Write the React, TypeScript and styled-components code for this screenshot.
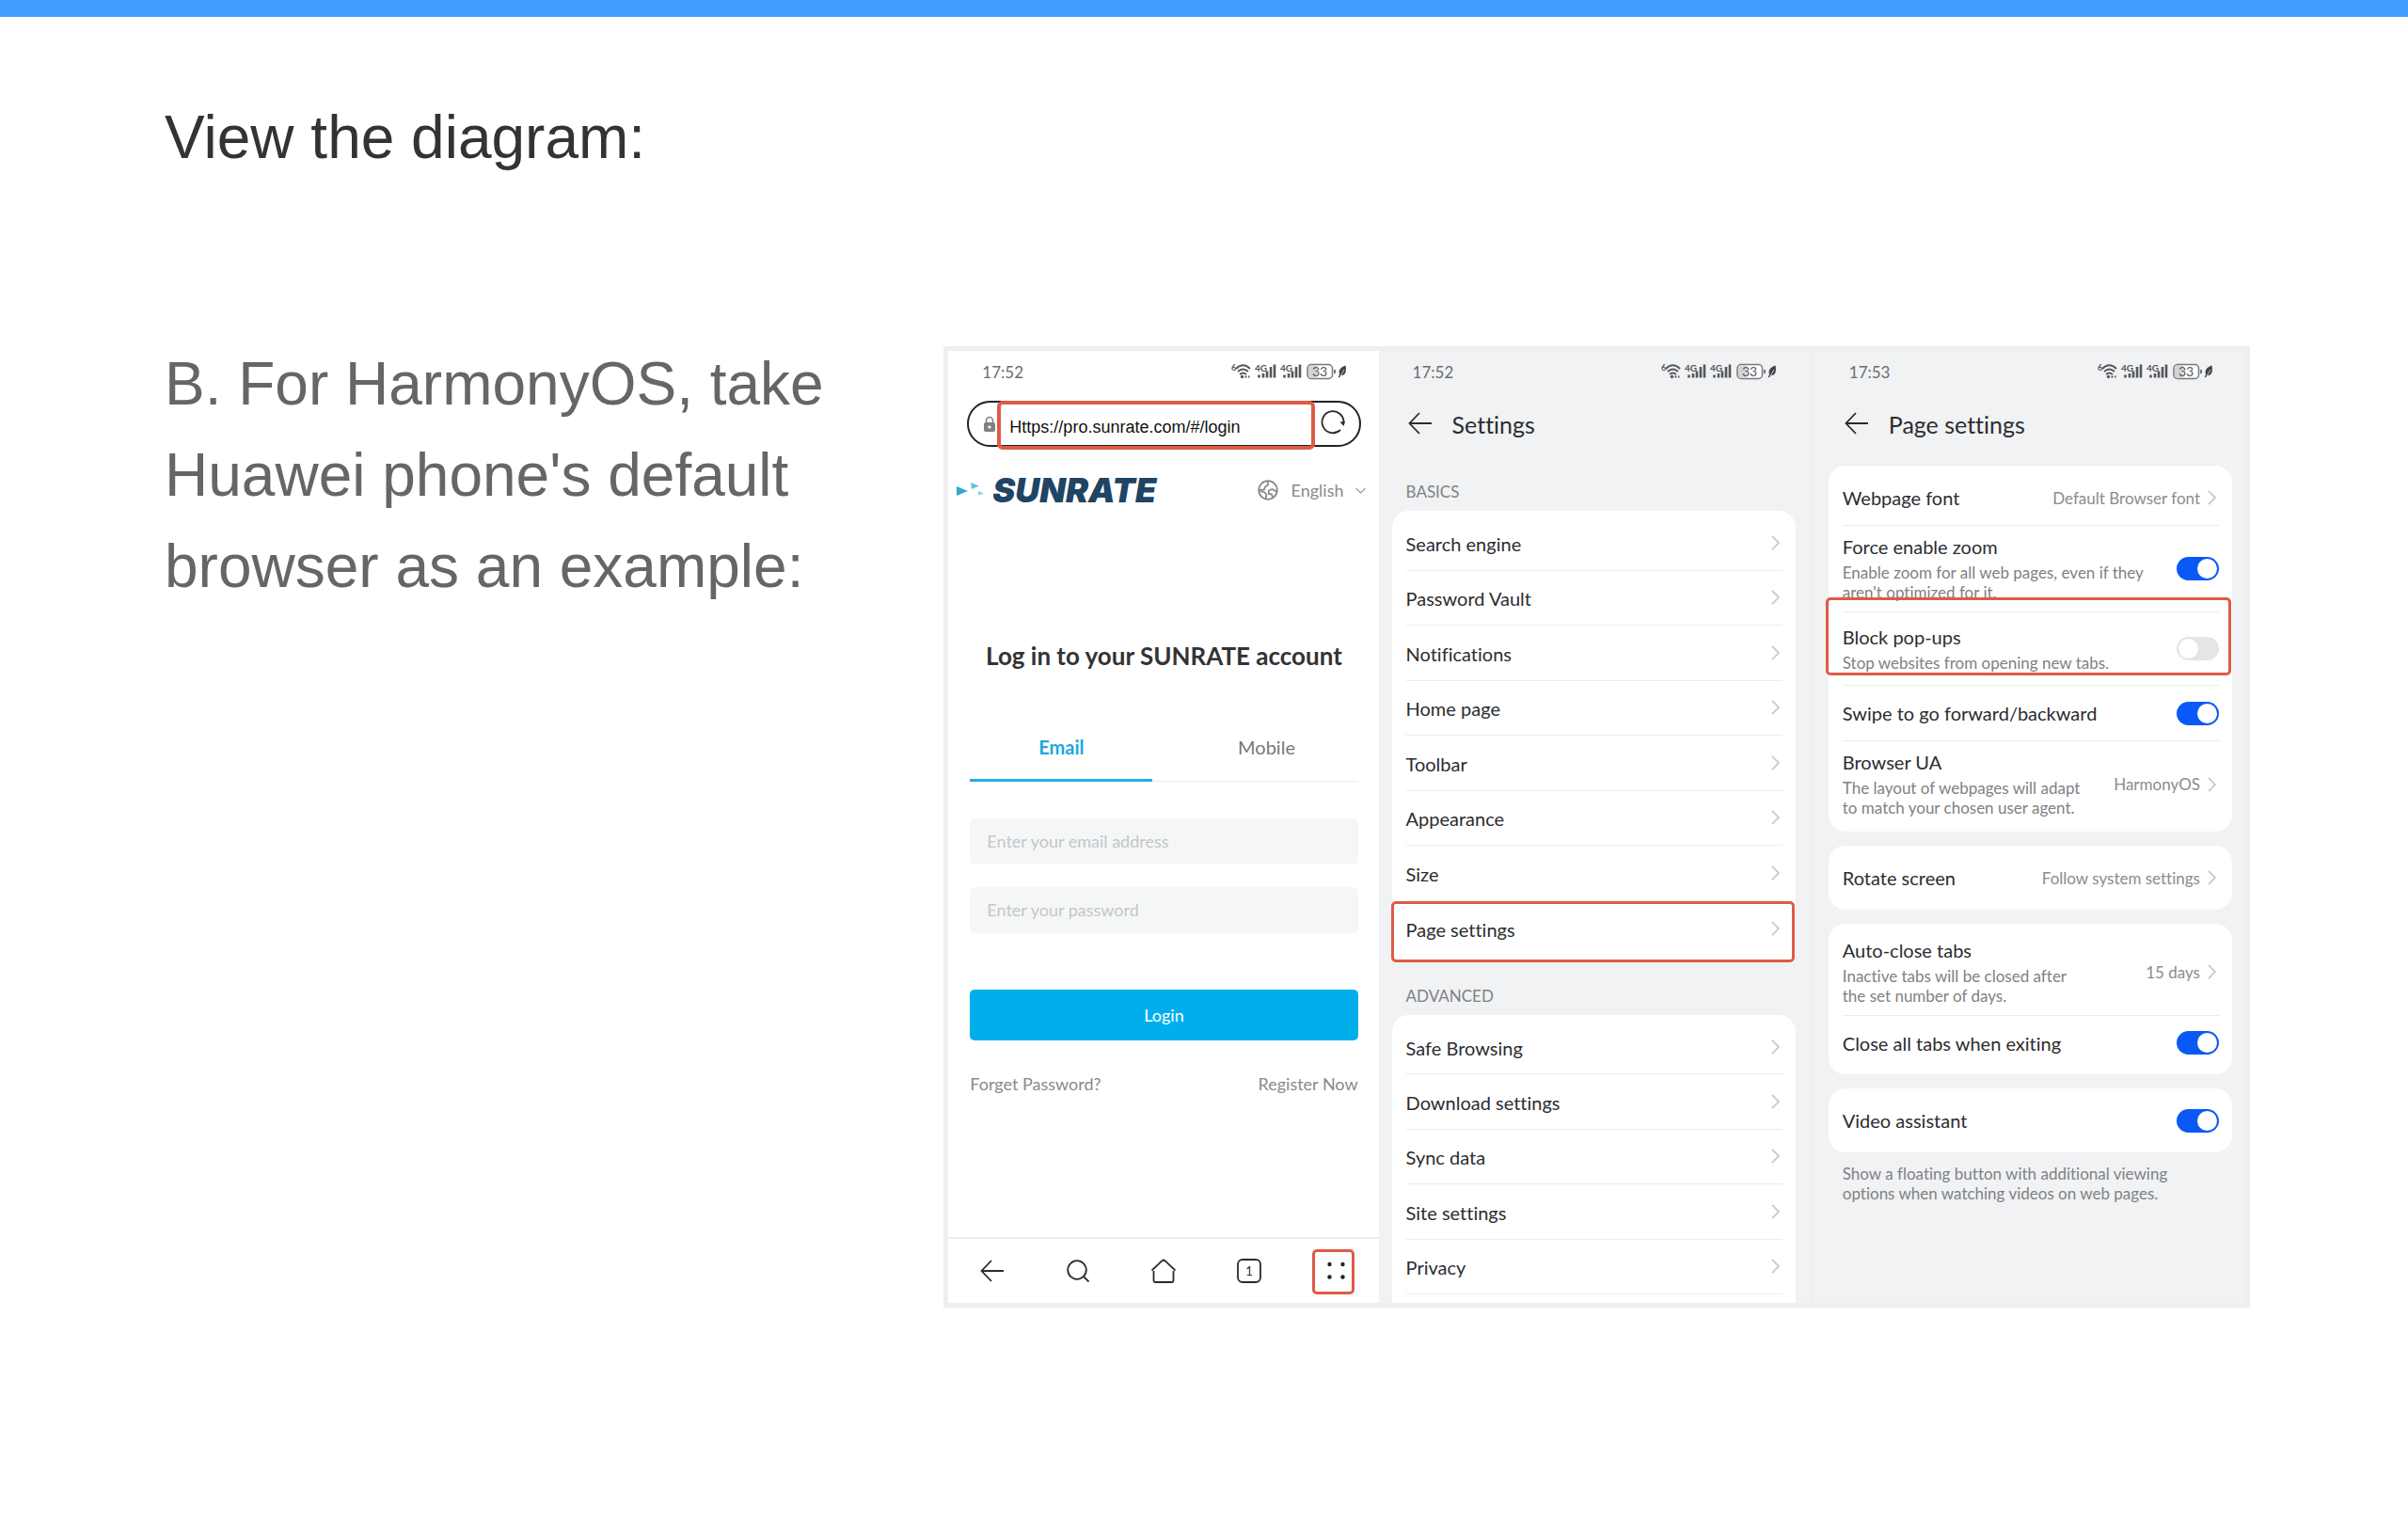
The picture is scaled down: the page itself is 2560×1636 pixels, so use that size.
import React from "react";
import styled, { createGlobalStyle, css } from "styled-components";

const phoneFont = `Lato, "Noto Sans", sans-serif`;
const ink = "#2c2d2f";
const muted = "#7f8184";
const accent = "#de5b48";

const GlobalStyle = createGlobalStyle`
  * { box-sizing: border-box; }
  body { margin: 0; background: #fff; }
  button, input, select { font: inherit; color: inherit; margin: 0; }
  button { border: 0; padding: 0; background: none; cursor: pointer; }
  h1, h2, h3, p { margin: 0; font-weight: 400; }
`;

const Page = styled.main`
  border-top: 18px solid #409eff;
  font-family: "Liberation Sans", Arial, sans-serif;
  padding: 80px 168px 80px 175px;
`;
const Heading = styled.h1`
  font-size: 64px;
  line-height: 96px;
  color: #333;
`;
const Content = styled.section`
  display: grid;
  grid-template-columns: 828fr 1388fr;
  margin-top: 174px;
  align-items: start;
`;
const Lead = styled.p`
  font-size: 64px;
  line-height: 97px;
  color: #666;
  margin-top: -8px;
  padding-right: 48px;
`;
const Figure = styled.div`
  display: grid;
  grid-template-columns: 1fr 1fr 7px 1fr;
  height: 1022px;
  border: 5px solid #efefef;
  background: #efefef;
  font-family: ${phoneFont};
  font-variant-ligatures: none;
`;
const Divider = styled.div`
  background: #efefef;
`;
const Screen = styled.article<{ $plain?: boolean }>`
  display: flex;
  flex-direction: column;
  min-width: 0;
  overflow: hidden;
  color: ${ink};
  background: ${(p) => (p.$plain ? "#fff" : "#f0f2f4")};
`;
const StatusBar = styled.header`
  display: flex;
  align-items: center;
  justify-content: space-between;
  height: 44px;
  padding: 0 35px 0 36px;
  flex: none;
  font-size: 17px;
  color: #6c6d70;
`;

/* browser screen */
const AddressRow = styled.div`
  display: flex;
  align-items: center;
  height: 49px;
  margin: 9px 19px 0 20px;
  padding: 0 15px 0 14px;
  border: 2px solid #232323;
  border-radius: 25px;
`;
const UrlBox = styled.div`
  position: relative;
  display: flex;
  align-self: stretch;
  flex: 1;
  margin-right: 6px;
  &::after {
    content: "";
    position: absolute;
    inset: -2px 0 -5px 0;
    border: 4px solid ${accent};
    border-radius: 6px;
    pointer-events: none;
  }
`;
const UrlInput = styled.input`
  width: 100%;
  padding: 8px 13px 0;
  border: 0;
  background: none;
  font-family: "Liberation Sans", Arial, sans-serif;
  font-size: 18px;
  color: #111;
`;
const Brand = styled.div`
  display: flex;
  align-items: center;
  justify-content: space-between;
  height: 48px;
  margin-top: 22px;
  padding: 0 14px 0 9px;
`;
const Logo = styled.div`
  display: flex;
  align-items: center;
  gap: 7px;
  font: italic 900 36px/40px Inter, sans-serif;
  color: #1f4464;
`;
const Language = styled.label`
  display: flex;
  align-items: center;
  color: #8a8a8a;
  font-size: 18px;
  select {
    appearance: none;
    border: 0;
    background: none;
    padding: 0;
    margin: 0 12px 0 14px;
  }
`;
const LoginForm = styled.form`
  display: flex;
  flex-direction: column;
  padding: 0 22px 0 23px;
`;
const LoginTitle = styled.h2`
  margin-top: 136px;
  text-align: center;
  white-space: nowrap;
  font-size: 26px;
  line-height: 32px;
  font-weight: 700;
  color: #333;
`;
const Tabs = styled.div`
  display: grid;
  grid-template-columns: 1fr 1fr;
  column-gap: 24px;
  margin-top: 47px;
  box-shadow: inset 0 -1px #e8eaed;
`;
const Tab = styled.button<{ $active?: boolean }>`
  height: 71px;
  font-size: 20px;
  color: #777;
  border-bottom: 3px solid transparent;
  ${(p) =>
    p.$active &&
    css`
      color: #1aa9de;
      font-weight: 700;
      border-color: #22aee4;
    `}
`;
const Field = styled.input`
  height: 49px;
  margin-bottom: 24px;
  padding: 0 18px 2px;
  border: 0;
  border-radius: 5px;
  background: #f5f7f7;
  font-size: 18px;
  &::placeholder { color: #c3c6cc; }
`;
const Fields = styled.div`
  display: flex;
  flex-direction: column;
  margin-top: 39px;
`;
const Submit = styled.button`
  height: 54px;
  margin-top: 36px;
  border-radius: 5px;
  background: #00aeec;
  color: #fff;
  font-size: 18px;
`;
const FormLinks = styled.div`
  display: flex;
  justify-content: space-between;
  margin-top: 34px;
  font-size: 18px;
  line-height: 24px;
  a { color: #8a8a8a; text-decoration: none; }
`;
const BottomNav = styled.nav`
  display: grid;
  grid-template-columns: repeat(5, 1fr);
  height: 70px;
  margin-top: auto;
  border-top: 2px solid #efefef;
`;
const NavButton = styled.button`
  position: relative;
  display: flex;
  align-items: center;
  justify-content: center;
`;
const MenuMark = styled.span`
  position: absolute;
  width: 45px;
  height: 48px;
  top: 11px;
  left: 21px;
  border: 3px solid ${accent};
  border-radius: 5px;
`;

/* settings screens */
const TitleBar = styled.div`
  display: flex;
  align-items: center;
  gap: 22px;
  flex: none;
  height: 68px;
  padding: 0 31px;
  h2 { font-size: 25px; line-height: 32px; }
`;
const SectionLabel = styled.h3`
  flex: none;
  margin: 26px 29px 8px;
  font-size: 17px;
  line-height: 24px;
  color: ${muted};
`;
const Card = styled.section<{ $flush?: boolean; $grow?: boolean }>`
  position: relative;
  flex: ${(p) => (p.$grow ? "1" : "none")};
  margin: 0 14px;
  padding: 5px 14px 5px 15px;
  background: #fff;
  border-radius: ${(p) => (p.$flush ? "18px 18px 0 0" : "18px")};
`;
const CardStack = styled.div`
  display: flex;
  flex-direction: column;
  gap: 15px;
  margin-top: 10px;
`;
const RowList = styled.div<{ $height: number; $closed?: boolean }>`
  display: grid;
  grid-auto-rows: 1fr;
  min-height: ${(p) => p.$height}px;
  > * { border-bottom: 1px solid #ebebeb; }
  > *:last-child { border-bottom-width: ${(p) => (p.$closed ? "1px" : "0")}; }
`;
const LinkRow = styled.button`
  display: flex;
  align-items: center;
  justify-content: space-between;
  padding-right: 3px;
  text-align: left;
  font-size: 20px;
  span { padding-top: 2px; }
`;
const OptionRows = styled.div`
  > * + * { border-top: 1px solid #ebebeb; }
`;
const optionRow = css<{ $height: number }>`
  display: flex;
  align-items: center;
  justify-content: space-between;
  width: 100%;
  height: ${(p) => p.$height}px;
  text-align: left;
`;
const OptionButton = styled.button<{ $height: number }>`
  ${optionRow}
  padding-right: 3px;
`;
const OptionLabel = styled.label<{ $height: number }>`
  ${optionRow}
`;
const OptionText = styled.span`
  display: flex;
  flex-direction: column;
  gap: 5px;
  white-space: pre;
`;
const OptionTitle = styled.span`
  font-size: 20px;
  line-height: 24px;
`;
const Hint = styled.span`
  font-size: 17px;
  line-height: 21px;
  color: ${muted};
`;
const OptionValue = styled.span`
  display: flex;
  align-items: center;
  gap: 8px;
  white-space: nowrap;
  font-size: 17px;
  color: #8a8c8f;
`;
const Toggle = styled.input`
  appearance: none;
  flex: none;
  display: flex;
  width: 45px;
  height: 25px;
  padding: 2px;
  border-radius: 13px;
  background: #e5e5e5;
  &::before {
    content: "";
    width: 21px;
    height: 21px;
    border-radius: 50%;
    background: #fff;
  }
  &:checked { background: #0a59f7; justify-content: flex-end; }
`;
const Footnote = styled.p`
  margin: 12px 29px 0;
  font-size: 17px;
  line-height: 21px;
  color: ${muted};
  white-space: pre-line;
`;
const Mark = styled.span<{ $top: number; $height: number; $left: number; $right: number }>`
  position: absolute;
  top: ${(p) => p.$top}px;
  height: ${(p) => p.$height}px;
  left: ${(p) => p.$left}px;
  right: ${(p) => p.$right}px;
  border: 3px solid ${accent};
  border-radius: 5px;
  pointer-events: none;
`;

const Signal = ({ x }: { x: number }) => (
  <g transform={`translate(${x} 0)`}>
    <text x="0" y="9.500" fontSize="10" fontWeight="700" fill="#55565a">4G</text>
    <path d="M4.500 13.500v3M9 12v4.500M13 9.500v7M17 5v11.500M21 2.500v14" stroke="#55565a" strokeWidth="2.600" fill="none" />
  </g>
);
const StatusIcons = () => (
  <svg width="122" height="20" viewBox="0 0 122 20" fontFamily={phoneFont} aria-hidden="true">
    <text x="0" y="9" fontSize="9" fontWeight="700" fill="#55565a">6</text>
    <g fill="none" stroke="#55565a" strokeWidth="1.900">
      <path d="M5 7q7.500-7.500 15 0M7 10q5.500-5 11 0M9 13q3.500-3 7 0" />
    </g>
    <circle cx="11.500" cy="15.500" r="1.700" fill="#55565a" />
    <path d="M14.500 15.500h2M18 15.500h1.500" stroke="#55565a" strokeWidth="1.800" />
    <Signal x={25} />
    <Signal x={52} />
    <rect x="81" y="2.500" width="26.500" height="15" rx="4" fill="#fff" stroke="#77787b" strokeWidth="1.500" />
    <path d="M85 3.500h6v13h-6a3 3 0 0 1-3-3v-7a3 3 0 0 1 3-3z" fill="#d4d4d6" />
    <text x="94" y="15" fontSize="14" textAnchor="middle" fill="#55565a">33</text>
    <path d="M110 8v4" stroke="#66676a" strokeWidth="1.800" />
    <path d="M121.500 3.500c-5 1.500-8 5-6.500 9.500l-1.300 3 1.500.3 1-2c5.500.5 6.500-5 5.300-10.800z" fill="#444548" />
    <path d="M116 15l4-7" stroke="#fff" strokeWidth=".7" />
  </svg>
);
const BackArrow = () => (
  <svg width="25" height="24" viewBox="0 0 25 24" fill="none" stroke="#2b2b2b" strokeWidth="1.800" aria-hidden="true">
    <path d="M25 12H1.500M12 1L1.500 12 12 23" />
  </svg>
);
const Chevron = () => (
  <svg width="9" height="16" viewBox="0 0 9 16" fill="none" stroke="#c9cacc" strokeWidth="1.800" aria-hidden="true">
    <path d="M1 .800L8 8l-7 7.200" />
  </svg>
);

const Status = ({ time }: { time: string }) => (
  <StatusBar>
    <span>{time}</span>
    <StatusIcons />
  </StatusBar>
);

const LoginScreen = () => (
  <Screen $plain>
    <Status time="17:52" />
    <AddressRow>
      <svg width="16" height="18" viewBox="0 0 16 18" aria-hidden="true">
        <path d="M4.500 8V5a3.500 3.500 0 0 1 7 0v3" fill="none" stroke="#808080" strokeWidth="1.600" />
        <rect x="2" y="7" width="12" height="10" rx="2" fill="#808080" />
        <circle cx="8" cy="12" r="1.600" fill="#fff" />
      </svg>
      <UrlBox>
        <UrlInput type="text" aria-label="Address" defaultValue="Https://pro.sunrate.com/#/login" />
      </UrlBox>
      <button type="button" aria-label="Reload">
        <svg width="26" height="26" viewBox="0 0 26 26" aria-hidden="true">
          <path d="M21 21a11.500 11.500 0 1 1 3.500-7.500" fill="none" stroke="#2b2b2b" strokeWidth="1.800" />
          <path d="M20.500 12.500l5.500-.500-1.500 5z" fill="#2b2b2b" />
        </svg>
      </button>
    </AddressRow>
    <Brand>
      <Logo>
        <svg width="31" height="20" viewBox="0 0 31 20" aria-hidden="true">
          <path d="M0 6l12 5L0 16z" fill="#2fa9cf" />
          <path d="M15 2l9 3.500-8 3.500z" fill="#62c4dc" />
          <path d="M23 11l6 2.500-6 2z" fill="#7fd0e4" />
        </svg>
        SUNRATE
      </Logo>
      <Language>
        <svg width="22" height="22" viewBox="0 0 22 22" fill="none" stroke="#8a8a8a" strokeWidth="1.800" strokeLinejoin="round" aria-hidden="true">
          <circle cx="11" cy="11" r="9.800" />
          <path d="M10.500 1.500l.5 4-3 2-1 3-5 .500M2.500 12l5 1.500 2 2.500-1 4.500M11.500 11.500l4-1.500 4.500 2.500M11.500 11.500l.5 3.500 3 .5 1 3.500" />
        </svg>
        <select aria-label="Language" defaultValue="English">
          <option>English</option>
        </select>
        <svg width="11" height="7" viewBox="0 0 11 7" fill="none" stroke="#9a9a9a" strokeWidth="1.200" aria-hidden="true">
          <path d="M.500 1l5 5 5-5" />
        </svg>
      </Language>
    </Brand>
    <LoginForm onSubmit={(e) => e.preventDefault()}>
      <LoginTitle>Log in to your SUNRATE account</LoginTitle>
      <Tabs role="tablist">
        <Tab type="button" role="tab" aria-selected="true" $active>Email</Tab>
        <Tab type="button" role="tab" aria-selected="false">Mobile</Tab>
      </Tabs>
      <Fields>
        <Field type="email" aria-label="Email address" placeholder="Enter your email address" />
        <Field type="password" aria-label="Password" placeholder="Enter your password" />
      </Fields>
      <Submit type="submit">Login</Submit>
      <FormLinks>
        <a href="#forget">Forget Password?</a>
        <a href="#register">Register Now</a>
      </FormLinks>
    </LoginForm>
    <BottomNav>
      <NavButton type="button" aria-label="Back"><BackArrow /></NavButton>
      <NavButton type="button" aria-label="Search">
        <svg width="24" height="24" viewBox="0 0 24 24" fill="none" stroke="#2b2b2b" strokeWidth="1.800" aria-hidden="true">
          <circle cx="11" cy="11" r="9.800" />
          <path d="M18.500 18.500l5 5" />
        </svg>
      </NavButton>
      <NavButton type="button" aria-label="Home">
        <svg width="26" height="26" viewBox="0 0 26 26" fill="none" stroke="#2b2b2b" strokeWidth="1.800" strokeLinejoin="round" aria-hidden="true">
          <path d="M.500 12.500L11.500 2.200q1.500-1.300 3 0l11 10.300M2.500 13v10q0 2 2 2h17q2 0 2-2V13" />
        </svg>
      </NavButton>
      <NavButton type="button" aria-label="Tabs">
        <svg width="26" height="26" viewBox="0 0 26 26" fontFamily={phoneFont} aria-hidden="true">
          <rect x="1" y="1" width="24" height="24" rx="5" fill="none" stroke="#2b2b2b" strokeWidth="1.800" />
          <text x="13" y="17.500" fontSize="13" textAnchor="middle" fill="#2b2b2b">1</text>
        </svg>
      </NavButton>
      <NavButton type="button" aria-label="Menu">
        <svg width="20" height="20" viewBox="0 0 20 20" fill="#222" aria-hidden="true">
          <circle cx="3.500" cy="3" r="2.200" />
          <circle cx="17.500" cy="3" r="2.200" />
          <circle cx="3.500" cy="16.500" r="2.200" />
          <circle cx="17.500" cy="16.500" r="2.200" />
        </svg>
        <MenuMark />
      </NavButton>
    </BottomNav>
  </Screen>
);

const basics = ["Search engine", "Password Vault", "Notifications", "Home page", "Toolbar", "Appearance", "Size", "Page settings"];
const advanced = ["Safe Browsing", "Download settings", "Sync data", "Site settings", "Privacy"];

const LinkRows = ({ items }: { items: string[] }) => (
  <>
    {items.map((item) => (
      <LinkRow type="button" key={item}>
        <span>{item}</span>
        <Chevron />
      </LinkRow>
    ))}
  </>
);

const SettingsScreen = () => (
  <Screen>
    <Status time="17:52" />
    <TitleBar>
      <button type="button" aria-label="Back"><BackArrow /></button>
      <h2>Settings</h2>
    </TitleBar>
    <SectionLabel>BASICS</SectionLabel>
    <Card $flush>
      <RowList $height={468}><LinkRows items={basics} /></RowList>
      <Mark $top={415} $height={65} $left={-1} $right={1} />
    </Card>
    <SectionLabel>ADVANCED</SectionLabel>
    <Card $flush $grow>
      <RowList $height={292} $closed><LinkRows items={advanced} /></RowList>
    </Card>
  </Screen>
);

type OptionProps = { title: string; hint?: string; height: number };
const OptionCopy = ({ title, hint }: { title: string; hint?: string }) => (
  <OptionText>
    <OptionTitle>{title}</OptionTitle>
    {hint && <Hint>{hint}</Hint>}
  </OptionText>
);
const Choice = ({ title, hint, height, value }: OptionProps & { value: string }) => (
  <OptionButton type="button" $height={height}>
    <OptionCopy title={title} hint={hint} />
    <OptionValue>{value}<Chevron /></OptionValue>
  </OptionButton>
);
const Switch = ({ title, hint, height, on }: OptionProps & { on?: boolean }) => (
  <OptionLabel $height={height}>
    <OptionCopy title={title} hint={hint} />
    <Toggle type="checkbox" role="switch" defaultChecked={on} />
  </OptionLabel>
);

const PageSettingsScreen = () => (
  <Screen>
    <Status time="17:53" />
    <TitleBar>
      <button type="button" aria-label="Back"><BackArrow /></button>
      <h2>Page settings</h2>
    </TitleBar>
    <CardStack>
      <Card>
        <OptionRows>
          <Choice title="Webpage font" value="Default Browser font" height={58} />
          <Switch title="Force enable zoom" hint={"Enable zoom for all web pages, even if they\naren't optimized for it."} height={92} on />
          <Switch title="Block pop-ups" hint="Stop websites from opening new tabs." height={78} />
          <Switch title="Swipe to go forward/backward" height={59} on />
          <Choice title="Browser UA" hint={"The layout of webpages will adapt\nto match your chosen user agent."} value="HarmonyOS" height={92} />
        </OptionRows>
        <Mark $top={140} $height={83} $left={-3} $right={1} />
      </Card>
      <Card>
        <Choice title="Rotate screen" value="Follow system settings" height={58} />
      </Card>
      <Card>
        <OptionRows>
          <Choice title="Auto-close tabs" hint={"Inactive tabs will be closed after\nthe set number of days."} value="15 days" height={92} />
          <Switch title="Close all tabs when exiting" height={58} on />
        </OptionRows>
      </Card>
      <Card>
        <Switch title="Video assistant" height={58} on />
      </Card>
    </CardStack>
    <Footnote>{"Show a floating button with additional viewing\noptions when watching videos on web pages."}</Footnote>
  </Screen>
);

export default function App() {
  return (
    <>
      <GlobalStyle />
      <Page>
        <Heading>View the diagram:</Heading>
        <Content>
          <Lead>B. For HarmonyOS, take Huawei phone's default browser as an example:</Lead>
          <Figure>
            <LoginScreen />
            <SettingsScreen />
            <Divider />
            <PageSettingsScreen />
          </Figure>
        </Content>
      </Page>
    </>
  );
}
